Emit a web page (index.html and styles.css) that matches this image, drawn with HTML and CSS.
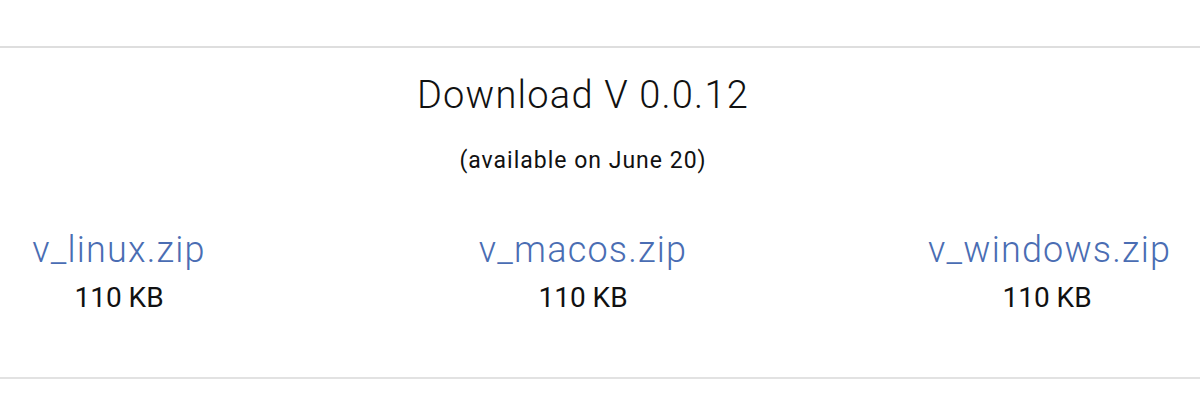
FILE: index.html
```html
<!DOCTYPE html>
<html lang="en">
  <head>
      <meta charset="UTF-8">
      <meta name="viewport" content="width=device-width, initial-scale=1.0">
      <title>Download V</title>
      <link rel="stylesheet" href="styles.css">
  </head>
  <body>
      <div class="top"></div>
      <section class="download">
          <div class="inner">
              <h1 class="title">Download V 0.0.12</h1>
              <p class="note">(available on June 20)</p>
              <div class="files">
                  <div class="file">
                      <a class="link" href="#">v_linux.zip</a>
                      <div class="size">110 KB</div>
                  </div>
                  <div class="file">
                      <a class="link" href="#">v_macos.zip</a>
                      <div class="size">110 KB</div>
                  </div>
                  <div class="file">
                      <a class="link" href="#">v_windows.zip</a>
                      <div class="size">110 KB</div>
                  </div>
              </div>
          </div>
      </section>
  </body>
</html>
```

FILE: styles.css
```css
*     {
      box-sizing: border-box;
}
body  {
    margin: 0;
    background-color: #fff;
    color: #111;
    font-family: Roboto, "Liberation Sans", sans-serif;
}
.top  {
    height: 46px;
}
.download   {
    border-top: 2px solid #dedede;
    border-bottom: 2px solid #e2e2e2;
    padding: 25px 0 63px 0;
}
.inner  {
    width: 1166px;
    text-align: center;
}
.title  {
    margin: 0;
    font-size: 38px;
    font-weight: 300;
    line-height: 44px;
    letter-spacing: 1.2px;
}
.note   {
    margin: 30px 0 0 0;
    font-size: 23px;
    font-weight: 400;
    line-height: 27px;
    letter-spacing: 1px;
}
.files  {
    display: grid;
    grid-template-columns: repeat(3, 238px);
    column-gap: 226px;
    margin-top: 55px;
}
.link   {
    display: block;
    color: #4a6db3;
    text-decoration: none;
    font-size: 36px;
    font-weight: 300;
    line-height: 42px;
    letter-spacing: 1.2px;
}
.size   {
    margin-top: 10px;
    font-size: 28px;
    line-height: 33px;
}
```
